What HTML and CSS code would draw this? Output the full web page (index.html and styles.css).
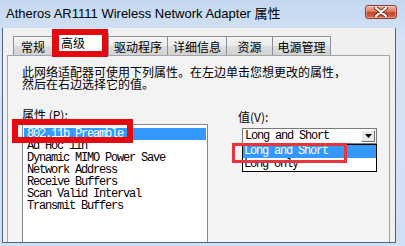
FILE: index.html
```html
<!DOCTYPE html>
<html lang="zh-CN">
<head>
<meta charset="utf-8">
<title>属性</title>
<link rel="stylesheet" href="styles.css">
</head>
<body>
<div class="window">
  <div class="titlebar">
    <span class="title">Atheros AR1111 Wireless Network Adapter 属性</span>
    <button class="close" aria-label="关闭">
      <svg width="14" height="10" viewBox="0 0 14 10">
        <path d="M2 1 L12 9 M12 1 L2 9" stroke="#7a2a1c" stroke-width="4" stroke-linecap="round"/>
        <path d="M2 1 L12 9 M12 1 L2 9" stroke="#ffffff" stroke-width="2.2" stroke-linecap="round"/>
      </svg>
    </button>
  </div>
  <div class="body">
    <div class="tabs">
      <div class="tab tab-general">常规</div>
      <div class="tab tab-adv active">高级</div>
      <div class="tab tab-driver">驱动程序</div>
      <div class="tab tab-detail">详细信息</div>
      <div class="tab tab-res">资源</div>
      <div class="tab tab-power">电源管理</div>
      <div class="mark mark-tab"></div>
    </div>
    <div class="panel">
      <p class="desc">此网络适配器可使用下列属性。在左边单击您想更改的属性，<br>然后在右边选择它的值。</p>
      <div class="props">
        <div class="col-left">
          <div class="label">属性 (P):</div>
          <div class="listbox">
            <div class="row selected">802.11b Preamble</div>
            <div class="row">Ad Hoc 11n</div>
            <div class="row">Dynamic MIMO Power Save</div>
            <div class="row">Network Address</div>
            <div class="row">Receive Buffers</div>
            <div class="row">Scan Valid Interval</div>
            <div class="row">Transmit Buffers</div>
          </div>
          <div class="mark mark-list"></div>
        </div>
        <div class="col-right">
          <div class="label label-value">值(V):</div>
          <div class="combo">
            <span class="combo-text">Long and Short</span>
            <span class="combo-btn">
              <svg width="7" height="4" viewBox="0 0 7 4"><path d="M0 0 H7 L3.5 4 Z" fill="#000"/></svg>
            </span>
            <div class="dropdown">
              <div class="opt selected">Long and Short</div>
              <div class="opt">Long only</div>
            </div>
            <div class="mark mark-combo"></div>
          </div>
        </div>
      </div>
    </div>
  </div>
</div>
</body>
</html>
```
FILE: styles.css
```css
html, body {
  margin: 0;
  padding: 0;
}
body {
  width: 405px;
  height: 246px;
  overflow: hidden;
  font-family: "Noto Sans CJK SC", "Liberation Sans", sans-serif;
  font-size: 12px;
  color: #000;
}
.window {
  width: 405px;
  height: 246px;
  background: linear-gradient(#c3d7ef, #d5e4f5 40px, #d0e0f3);
  display: flex;
  flex-direction: column;
  overflow: hidden;
}
.titlebar {
  height: 28px;
  flex: none;
  display: flex;
  justify-content: space-between;
  align-items: flex-start;
  padding-left: 6px;
  padding-right: 8px;
}
.title {
  font-family: "Liberation Sans", "Noto Sans CJK SC", sans-serif;
  font-size: 13px;
  line-height: 16px;
  margin-top: 6px;
  color: #000;
}
.close {
  margin-top: 5px;
  width: 32px;
  height: 14px;
  padding: 0;
  border: 1px solid #8a3d2e;
  border-radius: 3px;
  background: linear-gradient(#edb3a5, #dc7a63 45%, #c9432a 55%, #d7694c);
  display: flex;
  align-items: center;
  justify-content: center;
  box-shadow: inset 0 0 0 1px rgba(255,255,255,0.35);
}
.body {
  flex: 1;
  margin: 0 9px 3px 2px;
  border: 1px solid #50647f;
  border-top: none;
  background: #f0f0f0;
  padding: 8px 5px 0 4px;
  overflow: hidden;
}
.tabs {
  position: relative;
  display: flex;
  height: 19px;
  margin-left: 6px;
}
.tab {
  box-sizing: border-box;
  flex: none;
  height: 19px;
  border: 1px solid #8e9199;
  border-bottom: none;
  margin-left: -1px;
  background: linear-gradient(#f4f4f4, #ebebeb 50%, #dddddd 50%, #d2d2d2);
  font-size: 12px;
  line-height: 18px;
  padding-top: 1px;
  text-align: center;
}
.tab-general { width: 40px; margin-left: 0; }
.tab-adv { width: 57px; }
.tab-driver { width: 60px; }
.tab-detail { width: 60px; }
.tab-res { width: 47px; }
.tab-power { width: 59px; }
.tab.active {
  background: #ffffff;
  height: 22px;
  margin-top: -3px;
  line-height: 18px;
  padding-top: 0;
  text-align: left;
  padding-left: 8px;
  position: relative;
  z-index: 1;
}
.mark {
  position: absolute;
  box-sizing: border-box;
  pointer-events: none;
  z-index: 5;
}
.mark-tab {
  left: 39px;
  top: -7px;
  width: 56px;
  height: 28px;
  border: 6px solid #e50a12;
  border-left-width: 7px;
}
.panel {
  box-sizing: border-box;
  height: 260px;
  border: 1px solid #a3a6ad;
  background: #f3f3f3;
  padding: 10px 12px 0 14px;
}
.desc {
  margin: 0;
  font-size: 12px;
  line-height: 12px;
  white-space: nowrap;
}
.props {
  display: flex;
  margin-top: 19px;
  gap: 30px;
}
.col-left {
  position: relative;
  width: 186px;
}
.col-right {
  width: 139px;
}
.label {
  font-size: 12px;
  line-height: 12px;
  height: 12px;
}
.label-value {
  padding-top: 2px;
}
.listbox {
  margin-top: 3px;
  box-sizing: border-box;
  height: 130px;
  border: 1px solid #828790;
  background: #ffffff;
  padding: 3px 1px 0 1px;
}
.row, .combo-text, .opt {
  font-family: "Liberation Mono", "DejaVu Sans Mono", monospace;
  font-size: 12px;
  letter-spacing: -1.2px;
  white-space: nowrap;
}
.row {
  height: 12px;
  line-height: 12px;
  padding-left: 3px;
}
.row.selected, .opt.selected {
  background: #3399ff;
  color: #ffffff;
}
.mark-list {
  left: -10px;
  top: 10px;
  width: 121px;
  height: 24px;
  border: 6px solid #e50a12;
}
.combo {
  position: relative;
  margin-top: 5px;
  margin-left: 4px;
  box-sizing: border-box;
  width: 135px;
  height: 16px;
  border: 1px solid #7a7a7a;
  background: #ffffff;
  display: flex;
  align-items: center;
  justify-content: space-between;
}
.combo-text {
  padding-left: 2px;
  line-height: 14px;
}
.combo-btn {
  box-sizing: border-box;
  width: 14px;
  height: 12px;
  margin-right: 1px;
  border: 1px solid;
  border-color: #ffffff #707070 #707070 #ffffff;
  background: #ece9e4;
  display: flex;
  align-items: center;
  justify-content: center;
}
.dropdown {
  position: absolute;
  left: -1px;
  top: 15px;
  box-sizing: border-box;
  width: 135px;
  height: 28px;
  border: 1px solid #000000;
  background: #ffffff;
  z-index: 3;
}
.opt {
  height: 13px;
  line-height: 13px;
  padding-left: 1px;
}
.mark-combo {
  left: -11px;
  top: 14px;
  width: 115px;
  height: 20px;
  border: 3px solid #e8343c;
}
```
